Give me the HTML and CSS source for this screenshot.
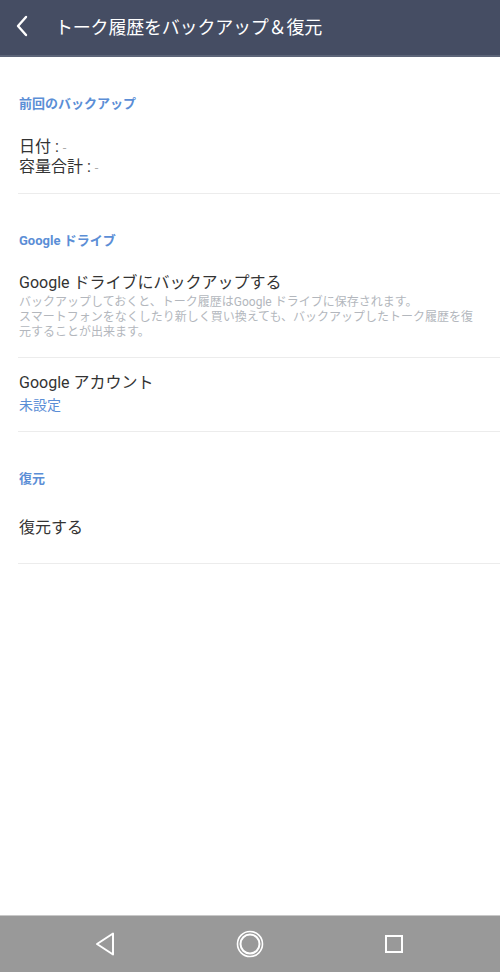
FILE: index.html
```html
<!DOCTYPE html>
<html lang="ja">
<head>
	<meta charset="UTF-8">
	<title>トーク履歴をバックアップ＆復元</title>
	<link rel="stylesheet" href="styles.css">
</head>
<body>
<div class="screen">
	<div class="topbar">
		<svg class="back" width="14" height="22" viewBox="0 0 14 22">
			<path d="M11 2 L3 11 L11 20" fill="none" stroke="#fff" stroke-width="2.4" stroke-linecap="round" stroke-linejoin="round"/>
		</svg>
		<span class="title">トーク履歴をバックアップ＆復元</span>
	</div>

	<div class="content">
		<div class="sec-title">前回のバックアップ</div>
		<div class="item item-info">
			<div class="info">日付 : <span class="dash">-</span></div>
			<div class="info">容量合計 : <span class="dash">-</span></div>
		</div>

		<div class="sec-title">Google ドライブ</div>
		<div class="item item-first">
			<div class="main">Google ドライブにバックアップする</div>
			<div class="desc">バックアップしておくと、トーク履歴はGoogle ドライブに保存されます。<br>スマートフォンをなくしたり新しく買い換えても、バックアップしたトーク履歴を復元することが出来ます。</div>
		</div>
		<div class="item">
			<div class="main">Google アカウント</div>
			<div class="sub">未設定</div>
		</div>

		<div class="sec-title">復元</div>
		<div class="item item-first item-last">
			<div class="main">復元する</div>
		</div>
	</div>

	<div class="navbar">
		<svg width="24" height="26" viewBox="0 0 24 26">
			<path d="M19 2.5 L19 23.5 L3 13 Z" fill="none" stroke="#fff" stroke-width="2" stroke-linejoin="round"/>
		</svg>
		<svg width="28" height="28" viewBox="0 0 28 28">
			<circle cx="14" cy="14" r="12.5" fill="none" stroke="#fff" stroke-width="1.6"/>
			<circle cx="14" cy="14" r="9.5" fill="none" stroke="#fff" stroke-width="2"/>
		</svg>
		<svg width="24" height="24" viewBox="0 0 24 24">
			<rect x="4" y="4" width="16" height="16" fill="none" stroke="#fff" stroke-width="2"/>
		</svg>
	</div>
</div>
</body>
</html>
```

FILE: styles.css
```css
body{
	margin: 0;
	font-family: Roboto, "Noto Sans CJK JP", sans-serif;
	color: #333;
	background: #fff;
}
.screen{
	width: 500px;
	height: 972px;
	display: flex;
	flex-direction: column;
}
.topbar{
	height: 57px;
	box-sizing: border-box;
	padding-bottom: 3px;
	background: #454d63;
	border-bottom: 2px solid #5c6478;
	display: flex;
	align-items: center;
}
.back{
	margin-left: 15px;
	margin-right: 26px;
}
.title{
	color: #fff;
	font-size: 18px;
	letter-spacing: -0.2px;
}
.content{
	flex: 1;
}
.sec-title{
	padding: 37px 0 0 19px;
	line-height: 20px;
	font-size: 13px;
	font-weight: bold;
	color: #5b8ed6;
}
.item{
	margin-left: 18px;
	padding: 14px 0 15px 1px;
	min-height: 72px;
	box-sizing: border-box;
	border-bottom: 1px solid #ececec;
	display: flex;
	flex-direction: column;
	justify-content: center;
}
.item-first{
	padding-top: 21px;
	padding-bottom: 17px;
}
.item-info{
	padding-top: 23px;
	padding-bottom: 16px;
}
.item-last{
	min-height: 75px;
}
.info{
	font-size: 16px;
	line-height: 19px;
}
.dash{
	color: #aaa;
	font-size: 13px;
}
.main{
	font-size: 16px;
	line-height: 22px;
}
.desc{
	max-width: 462px;
	margin-top: 1px;
	font-size: 12px;
	line-height: 15px;
	color: #b3b7bd;
}
.sub{
	font-size: 14px;
	line-height: 22px;
	color: #5b8ed6;
}
.navbar{
	height: 57px;
	background: #999;
	border-top: 1px solid #c8c8c8;
	box-sizing: border-box;
	display: flex;
	align-items: center;
	justify-content: center;
	gap: 118px;
}
```
